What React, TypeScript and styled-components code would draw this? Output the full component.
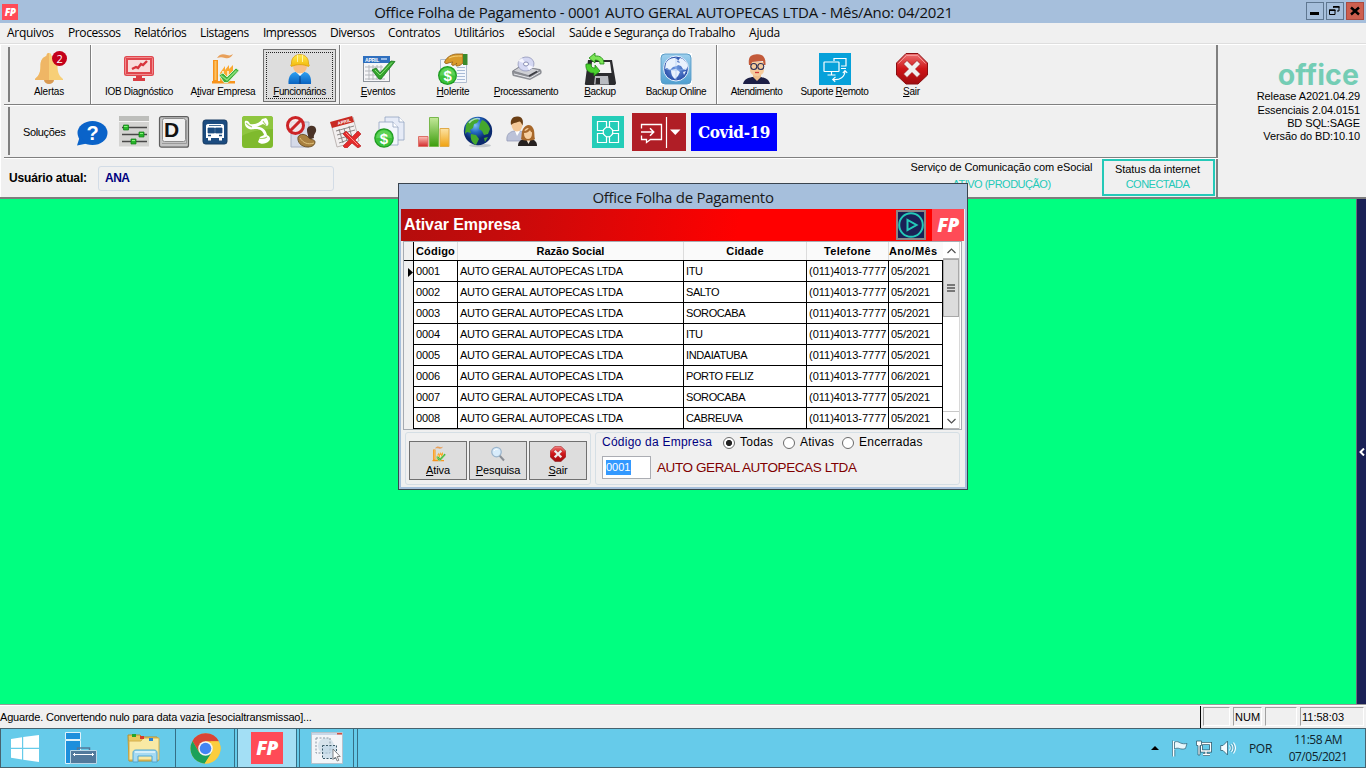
import React from "react";
import styled, { createGlobalStyle, css } from "styled-components";

const GlobalStyle = createGlobalStyle`
  * { box-sizing: border-box; }
  body { margin: 0; overflow: hidden; background: #f0f0f0; }
  u { text-decoration: underline; text-underline-offset: 1px; text-decoration-thickness: 1px; }
`;

const sans = `"Liberation Sans", Arial, sans-serif`;
const segoe = `"Open Sans", "Noto Sans", sans-serif`;

/* ---------- Shell ---------- */

const Screen = styled.div`
  position: relative;
  display: flex;
  flex-direction: column;
  width: 1366px;
  height: 768px;
  overflow: hidden;
  background: #f0f0f0;
  color: #000;
  font: 11px/13px ${sans};
  white-space: nowrap;
`;

const TitleBar = styled.header`
  display: grid;
  grid-template-columns: 60px 1fr 60px;
  align-items: center;
  height: 23px;
  background: #a6bfdc;
`;

const AppTitle = styled.h1`
  margin: 0;
  padding-right: 39px;
  text-align: center;
  font: 400 15px/22px ${segoe};
  letter-spacing: -0.25px;
  color: #111;
`;

const FpBadge = styled.span<{ $w: number; $h: number; $size: number }>`
  display: flex;
  align-items: center;
  justify-content: center;
  flex: none;
  width: ${(p) => p.$w}px;
  height: ${(p) => p.$h}px;
  background: #ff4b57;
  color: #fff;
  font: italic 800 ${(p) => p.$size}px/1 ${segoe};
  letter-spacing: -0.6px;
`;

const AppIcon = styled.div`
  padding: 0 0 0 2px;
`;

const WindowButtons = styled.div`
  display: flex;
  gap: 2px;
  justify-content: flex-end;
  padding: 0 2px 1px 0;
`;

const WindowButton = styled.button<{ $close?: boolean }>`
  width: 18px;
  height: 18px;
  padding: 0;
  border: 1px solid ${(p) => (p.$close ? "#a94a40" : "#5f7791")};
  background: ${(p) => (p.$close ? "#cd5f4f" : "#a6bfdc")};
  svg { display: block; }
`;

const MenuBar = styled.nav`
  display: flex;
  height: 21px;
  padding-left: 7px;
  border-bottom: 1px solid #dedede;
  font: 12px/19px ${segoe};
`;

const MenuItem = styled.span<{ $w: number; $ls: number }>`
  width: ${(p) => p.$w}px;
  letter-spacing: ${(p) => p.$ls}px;
`;

const HeaderArea = styled.section`
  display: flex;
  height: 155px;
  border-top: 1px solid #fff;
  border-bottom: 2px solid #7d7d7d;
`;

const Toolbars = styled.div`
  display: flex;
  flex-direction: column;
  width: 1218px;
  padding-left: 3px;
  border-left: 1px solid #fff;
`;

const Band = styled.div<{ $h: number }>`
  display: flex;
  height: ${(p) => p.$h}px;
  border-bottom: 1px solid #808080;
  border-right: 2px solid #808080;
  box-shadow: 0 1px 0 #fff;
`;

const Grip = styled.span`
  flex: none;
  width: 6px;
  margin: 2px 0;
  border-right: 2px solid #808080;
`;

const ToolGroup = styled.div<{ $cols: string; $line?: boolean }>`
  display: grid;
  grid-template-columns: ${(p) => p.$cols};
  align-items: start;
  padding-top: 4px;
  ${(p) => p.$line && css`border-right: 1px solid #808080; box-shadow: 1px 0 0 #fff;`}
`;

const ToolButton = styled.button<{ $active?: boolean; $ls?: number }>`
  display: flex;
  flex-direction: column;
  align-items: center;
  height: 53px;
  padding: ${(p) => (p.$active ? "3px 0 0" : "4px 0 0")};
  border: ${(p) => (p.$active ? "1px solid #707070" : "0")};
  background: ${(p) => (p.$active ? "#dddddd" : "none")};
  outline: ${(p) => (p.$active ? "1px dotted #222" : "0")};
  outline-offset: -4px;
  font: 10px/13px ${sans};
  letter-spacing: ${(p) => p.$ls ?? -0.3}px;
  color: #000;
  svg { flex: none; overflow: visible; }
`;

const Solutions = styled.div`
  display: flex;
  align-items: center;
  padding: 2px 0 0 13px;
`;

const SolutionsLabel = styled.span`
  width: 53px;
  letter-spacing: -0.35px;
`;

const IconSlot = styled.span<{ $gap: number }>`
  display: flex;
  margin-left: ${(p) => p.$gap}px;
`;

const RedButton = styled.button`
  width: 54px;
  height: 38px;
  margin-left: 8px;
  padding: 0;
  border: 0;
  background: #b01e26;
  svg { display: block; }
`;

const CovidButton = styled.button`
  width: 86px;
  height: 38px;
  margin-left: 5px;
  padding: 0;
  border: 0;
  background: #0000ff;
  color: #fff;
  font: bold 17px/37px "DejaVu Serif Condensed", "DejaVu Serif", serif;
  font-stretch: condensed;
  letter-spacing: -0.4px;
`;

const UserRow = styled.div`
  display: flex;
  flex: 1;
  align-items: center;
  padding-left: 5px;
  margin-top: 1px;
  border-right: 2px solid #808080;
`;

const UserLabel = styled.strong`
  width: 89px;
  font-size: 12px;
  letter-spacing: -0.15px;
`;

const UserField = styled.span`
  width: 236px;
  height: 25px;
  padding-left: 6px;
  border: 1px solid #d3dce6;
  border-radius: 3px;
  font: bold 12px/22px ${sans};
  letter-spacing: -0.5px;
  color: #000080;
`;

const ServiceStatus = styled.div`
  width: 184px;
  height: 38px;
  margin-left: auto;
  padding: 2px 1px 0 0;
  text-align: center;
  letter-spacing: -0.1px;
  line-height: 12px;
`;

const StatusValue = styled.div<{ $top: number }>`
  margin-top: ${(p) => p.$top}px;
  letter-spacing: -0.5px;
  color: #24c9b8;
`;

const InternetStatus = styled.div`
  align-self: flex-start;
  width: 113px;
  height: 37px;
  margin: 0 1px 0 8px;
  padding: 2px 2px 0 0;
  border: 2px solid #24c9b8;
  text-align: center;
  letter-spacing: -0.08px;
  line-height: 13px;
`;

const Release = styled.aside`
  display: flex;
  flex-direction: column;
  align-items: flex-end;
  flex: 1;
  padding: 16px 6px 0 0;
`;

const OfficeLogo = styled.div`
  height: 28px;
  margin-right: 1px;
  font: 700 28.5px/28px Inter, sans-serif;
  letter-spacing: 0.1px;
  color: #74cdb5;
`;

const ReleaseLine = styled.div<{ $h: number }>`
  height: ${(p) => p.$h}px;
  line-height: ${(p) => p.$h}px;
  letter-spacing: -0.1px;
`;

const Workspace = styled.main`
  display: flex;
  height: 506px;
  background: #00ff80;
  border-bottom: 1px solid #9a9a9a;
`;

const SideDrawer = styled.div`
  display: flex;
  align-items: center;
  justify-content: center;
  width: 10px;
  margin-left: auto;
  border-left: 1px solid #6c6c7c;
  background: #1a2156;
`;

const StatusBar = styled.footer`
  display: flex;
  height: 23px;
  border-top: 1px solid #fff;
  line-height: 22px;
`;

const StatusMessage = styled.span`
  flex: none;
  width: 1200px;
  letter-spacing: -0.2px;
`;

const StatusCells = styled.div`
  display: flex;
  gap: 3px;
  flex: 1;
  padding: 1px 2px 2px 2px;
  border-left: 1px solid #000;
`;

const StatusCell = styled.span<{ $w: number; $pad?: number }>`
  flex: none;
  width: ${(p) => p.$w}px;
  padding-left: ${(p) => p.$pad ?? 0}px;
  border: 1px solid;
  border-color: #a0a0a0 #fff #fff #a0a0a0;
  line-height: 19px;
`;

const Taskbar = styled.div`
  display: flex;
  height: 40px;
  border: 1px solid #47636f;
  background: #66cbea;
`;

const TaskSlot = styled.div<{ $w: number; $bg?: string; $framed?: boolean }>`
  display: flex;
  align-items: center;
  justify-content: center;
  width: ${(p) => p.$w}px;
  margin-right: ${(p) => (p.$framed ? 2 : 0)}px;
  background: ${(p) => p.$bg ?? "none"};
  ${(p) => p.$framed && css`border: solid #356f86; border-width: 0 1px;`}
`;

const TaskEdge = styled.span`
  width: 1px;
  margin-left: 1px;
  background: #356f86;
`;

const Tray = styled.div`
  display: flex;
  align-items: center;
  gap: 8px;
  margin-left: auto;
  padding-right: 9px;
  font: 12px/17px ${segoe};
  color: #10242c;
`;

const TrayArrow = styled.svg`
  margin-right: 5px;
`;

const TrayLanguage = styled.span`
  margin-left: 5px;
  letter-spacing: -0.3px;
`;

const TrayClock = styled.div`
  width: 76px;
  text-align: center;
  letter-spacing: -0.5px;
`;

/* ---------- Dialog ---------- */

const Dialog = styled.section`
  position: absolute;
  left: 398px;
  top: 183px;
  display: flex;
  flex-direction: column;
  width: 570px;
  height: 307px;
  padding: 0 2px 2px;
  border: 1px solid #3a444e;
  background: #a6bfdc;
`;

const DialogTitle = styled.h2`
  height: 25px;
  margin: 0;
  text-align: center;
  font: 400 15px/26px ${segoe};
  letter-spacing: -0.28px;
  color: #1a1a1a;
`;

const DialogBody = styled.div`
  display: flex;
  flex-direction: column;
  flex: 1;
  background: #f0f0f0;
`;

const Banner = styled.div`
  display: flex;
  align-items: center;
  width: 563px;
  height: 32px;
  padding-left: 3px;
  background: linear-gradient(100deg, #b40d0d 0%, #c50b0b 18%, #ff0000 60%);
  color: #fff;
  font: bold 16px/32px ${sans};
  letter-spacing: -0.08px;
`;

const PlayButton = styled.button`
  width: 30px;
  height: 30px;
  margin: 0 6px 0 auto;
  padding: 0;
  border: 2px solid #8c8585;
  background: #1a2156;
  svg { display: block; }
`;

const GridFrame = styled.div`
  display: flex;
  width: 559px;
  height: 189px;
  margin-left: 2px;
  border: 1px solid #a6abb2;
  background: #fff;
`;

const Table = styled.div`
  width: 539px;
`;

const columns = "10px 44px 226px 123px 82px 54px";

const TableHead = styled.div`
  display: grid;
  grid-template-columns: ${columns};
  height: 19px;
  border-bottom: 1px solid #000;
  background: #fafafa;
  font-weight: bold;
  line-height: 18px;
`;

const HeadCell = styled.span<{ $ls?: number; $last?: boolean }>`
  text-align: ${(p) => (p.$last ? "left" : "center")};
  letter-spacing: ${(p) => p.$ls ?? 0}px;
  border-right: ${(p) => (p.$last ? "0" : "1px solid #dcdcdc")};
`;

const Marker = styled.span`
  position: relative;
  background: #f0f0f0;
  border-right: 1px solid #000;
  svg { position: absolute; right: 0; top: 7px; }
`;

const Row = styled.div`
  display: grid;
  grid-template-columns: ${columns};
  height: 21px;
  border-bottom: 1px solid #000;
  line-height: 21px;
`;

const Cell = styled.span<{ $ls?: number }>`
  padding-left: 2px;
  border-right: 1px solid #000;
  letter-spacing: ${(p) => p.$ls ?? 0}px;
`;

const Scrollbar = styled.div`
  display: flex;
  flex-direction: column;
  width: 17px;
  border-right: 1px solid #d8d8d8;
`;

const ScrollArrow = styled.button`
  height: 17px;
  padding: 1px 0 0;
  border: 0;
  border-bottom: 1px solid #b5b5b5;
  background: #fff;
  svg { display: block; margin: auto; }
`;

const ScrollThumb = styled.div`
  display: flex;
  align-items: center;
  justify-content: center;
  height: 58px;
  border: 1px solid #a8a8a8;
  background: #dcdcdc;
`;

const ScrollTrack = styled.div`
  flex: 1;
  border-bottom: 1px solid #c8c8c8;
`;

const DialogFooter = styled.div`
  display: flex;
  gap: 4px;
  padding: 2px 0 0 4px;
`;

const Panel = styled.div<{ $w: number }>`
  width: ${(p) => p.$w}px;
  height: 53px;
  border: 1px solid #d5dfe5;
  border-radius: 3px;
`;

const ButtonPanel = styled(Panel)`
  display: flex;
  gap: 2px;
  padding: 8px 0 0 3px;
`;

const DialogButton = styled.button`
  display: flex;
  flex-direction: column;
  align-items: center;
  width: 58px;
  height: 39px;
  padding: 4px 0 0;
  border: 1px solid #707070;
  background: #dddddd;
  font: 11px/16px ${sans};
  letter-spacing: -0.1px;
  color: #000;
`;

const FilterRow = styled.div`
  display: flex;
  align-items: center;
  height: 19px;
  padding-left: 6px;
  font-size: 12px;
  letter-spacing: 0.24px;
`;

const FilterLabel = styled.span`
  width: 121px;
  color: #000080;
`;

const Option = styled.label<{ $w: number }>`
  display: flex;
  align-items: center;
  gap: 5px;
  width: ${(p) => p.$w}px;
`;

const Radio = styled.span<{ $on?: boolean }>`
  width: 12px;
  height: 12px;
  border: 1px solid #6a6a6a;
  border-radius: 50%;
  background: ${(p) => (p.$on ? "radial-gradient(#222 0 2.7px, #fff 3.5px)" : "#fff")};
`;

const CompanyRow = styled.div`
  display: flex;
  align-items: center;
  gap: 6px;
  padding: 4px 0 0 6px;
`;

const CodeInput = styled.span`
  width: 49px;
  height: 23px;
  padding: 3px;
  border: 1px solid #abadb3;
  background: #fff;
`;

const Selection = styled.span`
  display: block;
  width: 25px;
  height: 15px;
  background: #3399ff;
  color: #fff;
  line-height: 15px;
`;

const CompanyName = styled.span`
  font-size: 13.5px;
  letter-spacing: -0.4px;
  color: #800000;
`;

/* ---------- Icons ---------- */

type SvgProps = { size?: number; children: React.ReactNode };
const Svg = ({ size = 32, children }: SvgProps) => (
  <svg width={size} height={size} viewBox="0 0 32 32" fill="none">{children}</svg>
);

const BellIcon = () => (
  <Svg>
    <path d="M11 27h10a5 4 0 0 1-10 0z" fill="#d99a52" />
    <path d="M16 0c2 0 2.500 1.500 2.500 3 4.500 1.500 6 5 6 10 0 7 2 10 5.500 13v1H2v-1c3.500-3 5.500-6 5.500-13 0-5 1.500-8.500 6-10 0-1.500.5-3 2.500-3z" fill="#f7cf77" />
    <path d="M16 0c-2 0-2.500 1.500-2.500 3-4.500 1.500-6 5-6 10 0 7-2 10-5.500 13v1h14z" fill="#efb665" />
    <circle cx="26.500" cy="5.500" r="7.500" fill="#c4001a" />
    <text x="26.500" y="9.500" textAnchor="middle" fontFamily="Open Sans" fontSize="11" fill="#fff">2</text>
  </Svg>
);

const MonitorIcon = () => (
  <Svg>
    <rect x="1" y="3" width="30" height="20" rx="2.500" fill="#e0474e" />
    <rect x="2.500" y="4.500" width="27" height="17" rx="1" stroke="#f08c8e" />
    <rect x="5" y="7" width="22" height="12" fill="#f8dcdb" />
    <path d="M9 16l4-2 2 1 3-4 2 1 4-4" stroke="#d8333b" strokeWidth="2.400" />
    <path d="M13 23h6v2h3v3H10v-3h3z" fill="#d93d44" />
  </Svg>
);

const FactoryIcon = ({ size = 32 }: { size?: number }) => (
  <Svg size={size}>
    <path d="M10 5c3-5 7-4 10-3 3 .8 4 .3 6-1-2 4-5 5-8 4-3-1-5-1-8 0z" fill="#e8a05a" />
    <path d="M6 7h5v21h17v2.500H5V28h1z" fill="#f7941d" />
    <path d="M13 20l5-7v4l4-5v4l4-4v12l-5 4h-8z" fill="#fba931" />
    <path d="M7.500 8h2v19h-2z" fill="#fcc263" />
    <path d="M15 18h2v8h-2zM20 18h2v6h-2z" fill="#fbe3b4" />
    <path d="M12 22l4-2 4 4 9-9 3 2.500-11 12h-4z" fill="#3fae3a" stroke="#d8f0d0" strokeWidth="1" />
    <path d="M14 22.500l6 4.500 9.500-9.500" stroke="#8ce07c" strokeWidth="1.500" />
  </Svg>
);

const WorkerIcon = () => (
  <Svg>
    <defs>
      <linearGradient id="shirt" x1="0" y1="0" x2="0" y2="1"><stop stopColor="#2fa0f0" /><stop offset="1" stopColor="#0a63c0" /></linearGradient>
      <linearGradient id="hat" x1="0" y1="0" x2="0" y2="1"><stop stopColor="#ffe94a" /><stop offset="1" stopColor="#f2b90c" /></linearGradient>
    </defs>
    <path d="M4.500 31c-.5-7 2-11 7-12h9c5 1 7 5 6.500 12z" fill="url(#shirt)" />
    <path d="M12 19l4 4 4-4-1-2h-6z" fill="#fff" />
    <path d="M15.500 23h1l.7 8h-2.400z" fill="#0a4fa0" />
    <ellipse cx="16" cy="13" rx="7" ry="7.500" fill="#f8bf88" />
    <path d="M7.500 11C7 5 11 1.500 16 1.500S25 5 24.500 11c1 .5 1 2 0 2.500-5-2.500-12-2.500-17 0-1-.5-1-2 0-2.500z" fill="url(#hat)" stroke="#d89c08" strokeWidth=".7" />
    <path d="M13.500 2v7M18.500 2v7" stroke="#fff3a0" />
  </Svg>
);

const EventsIcon = () => (
  <Svg>
    <rect x="1.500" y="4" width="26" height="24.500" fill="#f6f6f8" stroke="#8d939b" />
    <rect x="1" y="3" width="27" height="7" fill="#2f6fbe" />
    <text x="3" y="8.700" fontFamily="Liberation Sans" fontWeight="bold" fontSize="5" fill="#fff">APRIL</text>
    <path d="M19 6h6" stroke="#b9d2f2" strokeWidth="1.500" />
    <path d="M3 14h18M3 18h20M3 22h20M3 26h20M7 12v15M11 12v15M15 12v15M19 12v15" stroke="#b5b8bd" />
    <path d="M10 17l4-2 4 5L29 8l4 .5L19 26h-2z" fill="#35a52e" stroke="#17751a" strokeWidth=".8" />
    <path d="M13 17l5 5L30 9.500" stroke="#8be07c" />
  </Svg>
);

const Coin = ({ x, y, r }: { x: number; y: number; r: number }) => (
  <>
    <circle cx={x} cy={y} r={r} fill="#1f9a22" />
    <circle cx={x} cy={y} r={r - 1.2} fill="#3cc23a" />
    <path d={`M${x - r + 2} ${y}a${r - 2} ${r - 2} 0 0 1 ${2 * r - 4} 0z`} fill="#6bd862" opacity=".7" />
    <text x={x} y={y + 5.5} textAnchor="middle" fontFamily="Liberation Sans" fontWeight="bold" fontSize="15" fill="#fff">$</text>
  </>
);

const PayslipIcon = () => (
  <Svg>
    <path d="M3.500 6.500h26v23h-26z" fill="#f4f7fc" stroke="#b0bdd0" />
    <path d="M20 14.500h8M20 17.500h8M20 20.500h8M20 23.500h8M20 26.500h8" stroke="#a9bbd6" />
    <path d="M8 8c2-4 7-7 12-7h6v9c-2 2-4 3-6 3-2 0-1-2 0-3-2 2-4 3-5 2s0-2 1-3c-3 .5-5 1-6 1.500C8 11 7 9.500 8 8z" fill="#d99a2b" stroke="#8d5a12" strokeWidth=".8" />
    <path d="M12 5c4-2 8-2 13-2" stroke="#f5cf74" />
    <path d="M26 1h4.500v11H26z" fill="#3a8a2c" />
    <Coin x={10.5} y={22.5} r={9.5} />
  </Svg>
);

const DriveIcon = () => (
  <Svg>
    <path d="M2 18l8-5 20 3c2 1 2 4 1 5l-11 6L3 23c-1-1-1-4-1-5z" fill="#8e9096" />
    <path d="M3 18l8-5 19 4-10 6z" fill="#cfd0d5" stroke="#77797f" strokeWidth=".7" />
    <path d="M4 21l16 4 10-6" stroke="#e8e8ec" />
    <ellipse cx="16" cy="11" rx="8" ry="7" transform="rotate(-8 16 11)" fill="#d5d8f3" stroke="#9599bb" strokeWidth=".8" />
    <path d="M16 11l-8-3 4-3zM16 11l8 3-5 3z" fill="#f5f5ff" />
    <ellipse cx="16" cy="11" rx="2.500" ry="2" fill="#fff" stroke="#8a8eb5" />
    <path d="M19 23l8-4.500" stroke="#3a3b40" strokeWidth="1.500" />
  </Svg>
);

const BackupIcon = () => (
  <Svg>
    <path d="M4 7h24l4 23c0 1.500-1 2-2 2H2c-1 0-1.500-1-1-2z" fill="#2b2b2e" />
    <path d="M8 9h18l1.500 11h-21z" fill="#f3f3f3" />
    <path d="M11 23h13l1 8.500H10z" fill="#b9bbc0" />
    <path d="M12 25h4v6h-4.500z" fill="#2b2b2e" />
    <path d="M2 11C1 18 6 20 10 20v3l6-5-5-6v3c-3 0-4-1-4-4z" fill="#4bd12e" stroke="#1d8a12" strokeWidth=".8" />
    <path d="M5 5l6-5v3c5-.5 9 2 9 8h-4c0-3-2-4-5-4v3z" fill="#7be355" stroke="#1d8a12" strokeWidth=".8" />
  </Svg>
);

const OnlineBackupIcon = () => (
  <Svg>
    <defs>
      <linearGradient id="tile" x1="0" y1="0" x2="0" y2="1"><stop stopColor="#9ed0ee" /><stop offset="1" stopColor="#4f9fd0" /></linearGradient>
      <radialGradient id="orb"><stop stopColor="#6f9be2" /><stop offset="1" stopColor="#2a4fa8" /></radialGradient>
    </defs>
    <rect width="32" height="32" fill="#fff" />
    <rect x="1" y="1" width="30" height="30" rx="4" fill="url(#tile)" stroke="#5c9cc6" />
    <circle cx="16" cy="15.500" r="12.500" fill="url(#orb)" stroke="#e8f4ff" />
    <path d="M6 10c2-4 6-5 9-5l3 2-1 2 3 1-3 3-4 1-3 3-3-2-2 1zM20 5c4 1 7 4 8 8l-2 4-3-1-2-3-3-1 2-3-2-1zM11 17l5-1 4 3-2 4-3 3c-3-2-4-5-4-9zM23 19l3-1-2 4z" fill="#e9f2fd" />
    <path d="M4 15c6 3 18 3 24 0M16 3v25" stroke="#a9c8f5" strokeWidth=".6" />
  </Svg>
);

const AttendantIcon = () => (
  <Svg>
    <path d="M2 31c1-5 5-6 9-7h9c4 1 8 2 9 7z" fill="#1d1f45" />
    <path d="M12 20h8v4l-4 4-4-4z" fill="#efbd8a" />
    <path d="M9 9h14v8c0 4-4 6-7 6s-7-2-7-6z" fill="#f7cc9c" />
    <path d="M8 12C7 5 9 2 14 1.500 20 .5 25 2 24.500 12h-1.500l-1-4-11 1-1 3z" fill="#c35a3a" />
    <circle cx="12.800" cy="13.500" r="3" stroke="#2b2d55" strokeWidth="1.100" />
    <circle cx="19.800" cy="13.500" r="3" stroke="#2b2d55" strokeWidth="1.100" />
    <path d="M14 19.500h4" stroke="#d23b3b" strokeWidth="1.300" />
  </Svg>
);

const RemoteIcon = () => (
  <Svg>
    <rect width="32" height="32" fill="#06a1da" />
    <path d="M15 8V5.500h12V13h-5" stroke="#fff" strokeWidth="1.200" />
    <rect x="5" y="9" width="15" height="9.500" rx=".5" stroke="#fff" strokeWidth="1.200" />
    <path d="M12.500 18.500v3M8.500 22h8M22 15.500h5" stroke="#fff" strokeWidth="1.200" />
    <path d="M14 26.500c7 1 12-3 12-8.500M23.800 20.200l2.200-2.700 2.200 2.400M16.500 24l-2.800 2.400 2.500 2.400" stroke="#fff" strokeWidth="1.100" />
  </Svg>
);

const ExitIcon = ({ size = 32 }: { size?: number }) => (
  <Svg size={size}>
    <defs>
      <linearGradient id={`exit${size}`} x1="0" y1="0" x2="0" y2="1"><stop stopColor="#ee7474" /><stop offset=".5" stopColor="#cf1518" /><stop offset="1" stopColor="#a00c10" /></linearGradient>
    </defs>
    <path d="M10 .5h12L31.500 10v12L22 31H10L.5 22V10z" fill={`url(#exit${size})`} stroke="#8a0f12" />
    <path d="M2.500 10.500L10.500 2.500h11l8 8" stroke="#f6a5a5" strokeWidth=".8" />
    <path d="M11 7.500l5 5 5-5 3.500 3.500-5 5 5 5-3.500 3.500-5-5-5 5L7.500 21l5-5-5-5z" fill="#f0f0f0" stroke="#a31012" strokeWidth=".7" />
  </Svg>
);

const HelpIcon = () => (
  <Svg>
    <ellipse cx="16.500" cy="17" rx="15" ry="12" fill="#0a63c9" />
    <path d="M4 20L1 29.500l10-2z" fill="#0a63c9" />
    <text x="16.500" y="24" textAnchor="middle" fontFamily="Liberation Sans" fontWeight="bold" fontSize="20" fill="#fff">?</text>
  </Svg>
);

const SlidersIcon = () => (
  <Svg>
    <rect x="1" y="0" width="30" height="31" fill="#d4d4d2" />
    <rect x="1" y="0" width="30" height="5" fill="#bdbebb" />
    <path d="M1 5.500h30M1 31h30" stroke="#f5f5f5" />
    <path d="M4 11.500h25M4 18.500h25M4 25.500h25" stroke="#484848" strokeWidth="1.400" />
    <path d="M5.500 9h5v5h-5zM21 16h5v5h-5zM13 23h5v5h-5z" fill="#27b52a" stroke="#107c16" strokeWidth=".7" />
    <path d="M6 10.500h3.500M22 17.500h3M14 24.500h3" stroke="#8bf07c" />
  </Svg>
);

const KeyDIcon = () => (
  <Svg>
    <rect x="1.500" y=".7" width="29" height="30.500" rx="2" fill="#c4c4c4" stroke="#5f5f5f" strokeWidth="1.200" />
    <rect x="4.500" y="2.500" width="23" height="23" rx="2" fill="#f1f1f1" stroke="#8d8d8d" />
    <path d="M4 27.500h24.500V4" stroke="#9a9a9a" />
    <text x="13.500" y="20.500" textAnchor="middle" fontFamily="Liberation Sans" fontWeight="bold" fontSize="21" fill="#111">D</text>
  </Svg>
);

const BusIcon = () => (
  <Svg>
    <rect x="4" y="4" width="24" height="24" rx="2.500" fill="#1c4c80" stroke="#163a63" />
    <path d="M9 8h14c1.500 0 2 1 2 2v12h-2v2.500h-3V22h-8v2.500H9V22H7V10c0-1 .5-2 2-2z" fill="#fff" />
    <path d="M10 9.500h12M9 12h6.500v5H9zM16.500 12H23v5h-6.500z" fill="#1c4c80" stroke="#1c4c80" strokeWidth=".8" />
    <path d="M9 19.500h3M20 19.500h3" stroke="#1c4c80" strokeWidth="1.600" />
  </Svg>
);

const GreenPhoneIcon = () => (
  <Svg>
    <rect x="0" y="0" width="31" height="32" rx="3" fill="#7fba2d" />
    <path d="M0 3a3 3 0 0 1 3-3h25a3 3 0 0 1 3 3v10C20 13 8 15 0 20z" fill="#8fc63f" />
    <path d="M3 5c3-1 4 1 5 3 5 1 10-1 12-5l4-1c3 3 3 7 1 8l-4-2c-2 1-4 2-7 3 6-1 10 3 11 8 3 1 4 4 2 6-3 3-8 4-11 1l2-5c1-1 3-1 4-2-1-4-4-6-8-6-3 0-5 1-7 0-3-1-5-4-4-8z" fill="#fff" />
    <path d="M17 22c3 1 5 1 8-1M4 7c2 2 3 3 6 4M21 5c1 2 2 3 3 4" stroke="#a9d268" strokeWidth="1.100" />
  </Svg>
);

const StampIcon = () => (
  <Svg>
    <path d="M5 6h18v25H5z" fill="#d5dae8" stroke="#aab0c4" />
    <path d="M21 14c0-5 8-6 9-1 1 4-3 5-2 9l-6 2c1-4-1-6-1-10z" fill="#4a3327" />
    <path d="M12 21c2-4 8-3 10 0s7 2 7 5-3 5-7 5c-7 0-11-5-10-10z" fill="#a9803f" stroke="#5e441b" strokeWidth=".8" />
    <path d="M14 22c3 5 8 7 14 5" stroke="#e0c27c" />
    <circle cx="9.500" cy="9.500" r="8" fill="#f9e9e9" fillOpacity=".7" stroke="#cc2427" strokeWidth="3" />
    <path d="M4 15L15 4" stroke="#cc2427" strokeWidth="3" />
  </Svg>
);

const CalendarXIcon = () => (
  <Svg>
    <path d="M1 7L23 1l6 24-22 6z" fill="#f2efef" stroke="#bdb6b4" />
    <path d="M0 6L22 0l2 6L2 12z" fill="#c92a22" />
    <text x="8" y="9" transform="rotate(-15 8 9)" fontFamily="Liberation Sans" fontWeight="bold" fontSize="4.500" fill="#fff">APRIL</text>
    <path d="M6 15l18-5M7 19l18-5M8 23l14-4M9 27l9-3M9 13l4 14M14 12l3 13M19 10l3 12" stroke="#8d8987" />
    <path d="M13 18l3-3 6 6 6-6 3 3-6 6 6 6-3 2-6-5-6 6-3-3 6-6z" fill="#e32b2b" stroke="#b01518" strokeWidth=".6" />
    <path d="M16 17l12 12" stroke="#ff8c86" strokeWidth="1" />
  </Svg>
);

const MoneyDocsIcon = () => (
  <Svg>
    <path d="M12 1h14l5 5v18H12z" fill="#e6ebf7" stroke="#93a3c0" strokeWidth=".8" />
    <path d="M26 1v5h5" fill="#fff" stroke="#93a3c0" strokeWidth=".8" />
    <path d="M6 6h14l5 5v18H6z" fill="#f3f6fc" stroke="#93a3c0" strokeWidth=".8" />
    <path d="M20 6v5h5" fill="#fff" stroke="#93a3c0" strokeWidth=".8" />
    <Coin x={11} y={22} r={9.8} />
  </Svg>
);

const BarsIcon = () => (
  <Svg>
    <defs>
      <linearGradient id="barRed" x1="0" y1="0" x2="0" y2="1"><stop stopColor="#fbc2b8" /><stop offset="1" stopColor="#d2282a" /></linearGradient>
      <linearGradient id="barGreen" x1="0" y1="0" x2="0" y2="1"><stop stopColor="#c3e89a" /><stop offset="1" stopColor="#3c9d0c" /></linearGradient>
      <linearGradient id="barGold" x1="0" y1="0" x2="0" y2="1"><stop stopColor="#fce3a4" /><stop offset="1" stopColor="#f0a210" /></linearGradient>
    </defs>
    <path d="M.5 20.500h9.500v10H.5z" fill="url(#barRed)" stroke="#dc7068" />
    <path d="M11.500 1.500h9v29h-9z" fill="url(#barGreen)" stroke="#78b84c" />
    <path d="M22 12.500h9v18h-9z" fill="url(#barGold)" stroke="#e0aa48" />
  </Svg>
);

const GlobeIcon = () => (
  <Svg>
    <defs><radialGradient id="sea" cx=".4" cy=".3"><stop stopColor="#7fc1f5" /><stop offset=".5" stopColor="#2468c2" /><stop offset="1" stopColor="#0b2a6e" /></radialGradient></defs>
    <ellipse cx="18" cy="29.500" rx="11" ry="1.800" fill="#c4c8cc" />
    <circle cx="16" cy="15" r="14.200" fill="url(#sea)" />
    <path d="M4 9c2-4 5-6 9-7l4 2-2 3-3 1-1 4-3 2 1 3-4-1-2 2zM20 4c4 1 7 5 8 9l-2 5-4 1-2-4-3-2 1-5zM9 18l5 1 3 4-3 6c-4-2-6-6-5-11zM22 22l4-1-3 5z" fill="#45a82e" />
    <path d="M7 7c3-4 8-5 11-4" stroke="#d7efff" strokeWidth="1.500" opacity=".7" />
  </Svg>
);

const PeopleIcon = () => (
  <Svg>
    <path d="M1 25c-1-6 2-9 7-10h6c4 1 6 4 6 10z" fill="#bcc2d8" stroke="#8f97b5" strokeWidth=".7" />
    <path d="M9 15l2 5 3-5z" fill="#fff" />
    <ellipse cx="11" cy="9" rx="5.500" ry="6.500" fill="#f3c796" />
    <path d="M5 9C4 3 7 0 12 .5c4 0 6 4 4.500 9-1-2-2-4-3-4-2 1-6 1-8.500 3.500z" fill="#6b3f14" />
    <path d="M12 30c0-4 2-6 6-7h7c4 1 6 3 6 7z" fill="#26211f" />
    <path d="M20 23l2.500 5 2.500-5z" fill="#f6e6d2" />
    <path d="M15 23c1-3 0-6 2-10 3-5 8-5 10-1 2 3 1 8 2 11-2 2-12 2-14 0z" fill="#a8682a" />
    <ellipse cx="22" cy="17.500" rx="4" ry="5.500" fill="#f7cfa0" />
    <path d="M18 16c3 0 5-2 6-4 1 2 2 3 2 4" stroke="#a8682a" strokeWidth="2" />
  </Svg>
);

const TealIcon = () => (
  <Svg>
    <rect width="32" height="32" fill="#24cdb8" />
    <g stroke="#fff" strokeWidth="1.200">
      <path d="M5.500 5.500h9v6L11 14.500H5.500zM26.500 5.500h-9v6l3.500 3h5.500zM5.500 26.500h9v-6L11 17.500H5.500zM26.500 26.500h-9v-6l3.500-3h5.500z" />
      <circle cx="16" cy="16" r="4.800" fill="#24cdb8" />
    </g>
  </Svg>
);

const ChatArrowIcon = () => (
  <svg width="54" height="38" viewBox="0 0 54 38" fill="none">
    <path d="M9.500 15.500v-4h20v15h-11l-4 3v-3h-5v-4" stroke="#fff" strokeWidth="1.300" />
    <path d="M9 19h12.500M18 15.300l3.700 3.700-3.700 3.700" stroke="#fff" strokeWidth="1.500" />
    <path d="M34.500 4v31" stroke="#fff" strokeWidth="1.200" />
    <path d="M38 16.500h10.500L43.300 22z" fill="#fff" />
  </svg>
);

const MagnifierIcon = () => (
  <Svg size={16}>
    <path d="M19 19l9 10" stroke="#8b8f96" strokeWidth="4" />
    <circle cx="13" cy="12" r="9.500" fill="#d8ecfb" stroke="#9bb5cc" strokeWidth="2.500" />
    <path d="M8 10c1-3 4-4 7-3" stroke="#fff" strokeWidth="2" />
  </Svg>
);

const WindowsIcon = () => (
  <svg width="28" height="27" viewBox="0 0 28 27" fill="#fff">
    <path d="M0 4l11-1.700v10.500H0zM12.200 2.100L28 0v12.800H12.200zM0 14h11v10.500L0 22.800zM12.200 14H28v13l-15.800-2.200z" />
  </svg>
);

const ServerIcon = () => (
  <svg width="32" height="32" viewBox="0 0 32 32" fill="none">
    <path d="M.5.500h15v7h-15z" fill="#1d8fdc" stroke="#dff2fb" />
    <path d="M.5 8.500h15v23h-15z" fill="#1d8fdc" stroke="#dff2fb" />
    <path d="M12.500 18v-2h12v2" stroke="#52799b" strokeWidth="1.500" />
    <path d="M5.500 18.500h26v13h-26z" fill="#52799b" stroke="#b9d6e6" />
    <path d="M8 22.500h21M9.500 21v3M27.500 21v3" stroke="#fff" />
  </svg>
);

const ExplorerIcon = () => (
  <svg width="34" height="30" viewBox="0 0 34 30" fill="none">
    <path d="M1 2h12l2 2h15l1 4v20H2z" fill="#e8c860" stroke="#b88f2c" />
    <path d="M2 8h12l2-3h16v22H2z" fill="#f9e9a4" stroke="#d4ae4c" />
    <path d="M5 1h4v3H5z" fill="#25a52c" /><path d="M13 3h4v3h-4z" fill="#d83a2c" /><path d="M22 5h4v3h-4z" fill="#2b83d8" />
    <path d="M6 29v-9c0-2 1-3 3-3h18c2 0 3 1 3 3v9h-5v-6H11v6z" fill="#a6daf2" stroke="#4ea8d4" />
    <path d="M8 19h20" stroke="#e4f6fd" strokeWidth="1.500" />
  </svg>
);

const ChromeIcon = () => (
  <Svg size={31}>
    <circle cx="16" cy="16" r="15.500" fill="#fcc934" />
    <path d="M16 8.500h13.800A15.500 15.500 0 0 0 2.600 8.200L9.500 20z" fill="#d94436" />
    <path d="M2.600 8.200a15.500 15.500 0 0 0 12.600 23.300L22.500 20 9.500 20z" fill="#1ba15a" />
    <path d="M29.600 8.700a15.500 15.500 0 0 1-14.400 22.800l7.300-11.500-1-11.300z" fill="#fbcd3e" />
    <circle cx="16" cy="16" r="7.500" fill="#f5f5f5" />
    <circle cx="16" cy="16" r="6" fill="#4285f4" />
  </Svg>
);

const SnipIcon = () => (
  <svg width="32" height="32" viewBox="0 0 32 32" fill="none">
    <path d="M.5.500h31v31H.5z" fill="#f3f5f8" stroke="#b7c2cc" />
    <path d="M1 1h30v2H1z" fill="#c9d8e8" /><path d="M26 1h5v1.500h-5z" fill="#d6503f" />
    <ellipse cx="15" cy="14" rx="8" ry="8" fill="#d6e3eb" />
    <path d="M5 6h14v15H5z" stroke="#8a98a5" strokeDasharray="2 1.500" />
    <path d="M11.500 13.500h14v13h-14z" fill="#bcd6e6" fillOpacity=".6" stroke="#3b5a68" strokeDasharray="2 1.500" />
    <path d="M22 17v10.500l2.500-2.500 1.700 4 1.600-.7-1.600-3.800h3z" fill="#fff" stroke="#666" strokeWidth=".8" />
  </svg>
);

const FlagIcon = () => (
  <svg width="16" height="17" viewBox="0 0 16 17" fill="none">
    <path d="M1.500 1v15.500" stroke="#fff" strokeWidth="2" /><path d="M.5.500v16M2.800 10v6.500" stroke="#3c6c80" strokeWidth=".7" />
    <path d="M2.500 2c3-1 4 0 6 1 2 .8 4 1 6.500.5l-1.500 5C11 9.500 9 9 7.500 8.500 6 8 4 8 2.500 9z" fill="#e8f7fc" stroke="#3c6c80" strokeWidth=".8" />
  </svg>
);

const NetworkIcon = () => (
  <svg width="16" height="16" viewBox="0 0 16 16" fill="none">
    <path d="M5.500 3.500h9v7.500h-9z" stroke="#2f5f73" strokeWidth="3" /><path d="M10 11v3M7 14.500h7" stroke="#2f5f73" strokeWidth="2.800" />
    <path d="M5.500 3.500h9v7.500h-9zM10 11v3M7 14.500h7" stroke="#fff" strokeWidth="1.300" />
    <path d="M.5 1h5v4.500H4V15H2V5.500H.5z" fill="#fff" stroke="#2f5f73" strokeWidth=".8" />
  </svg>
);

const SpeakerIcon = () => (
  <svg width="16" height="16" viewBox="0 0 16 16" fill="none">
    <path d="M.7 5.500H3L7.500 1v14L3 10.500H.7z" fill="#f4fbfe" stroke="#3c6c80" strokeWidth=".9" />
    <path d="M9.500 5.500c1 1.500 1 3.500 0 5M11.500 4c2 2.500 2 5.500 0 8M13.500 2.500c2.500 3.500 2.500 7.500 0 11" stroke="#fff" strokeWidth="1.100" />
    <path d="M10.400 5c1 2 1 4 0 6M12.500 3.500c2 3 2 6 0 9" stroke="#3c6c80" strokeWidth=".5" />
  </svg>
);

/* ---------- Data ---------- */

const menu: [string, number, number][] = [
  ["Arquivos", 61, -0.3], ["Processos", 66, -0.4], ["Relatórios", 66, -0.38], ["Listagens", 63, -0.37],
  ["Impressos", 67, -0.5], ["Diversos", 58, -0.45], ["Contratos", 66, -0.35], ["Utilitários", 64, -0.35],
  ["eSocial", 51, -0.35], ["Saúde e Segurança do Trabalho", 180, -0.37], ["Ajuda", 50, -0.2],
];

const solutions: [React.ComponentType, number][] = [
  [HelpIcon, 0], [SlidersIcon, 10], [KeyDIcon, 8], [BusIcon, 9], [GreenPhoneIcon, 11], [StampIcon, 12],
  [CalendarXIcon, 12], [MoneyDocsIcon, 11], [BarsIcon, 13], [GlobeIcon, 12], [PeopleIcon, 12], [TealIcon, 54],
];

const companies: [string, string, string][] = [
  ["0001", "ITU", "05/2021"], ["0002", "SALTO", "05/2021"], ["0003", "SOROCABA", "05/2021"],
  ["0004", "ITU", "05/2021"], ["0005", "INDAIATUBA", "05/2021"], ["0006", "PORTO FELIZ", "06/2021"],
  ["0007", "SOROCABA", "05/2021"], ["0008", "CABREUVA", "05/2021"],
];

/* ---------- Sections ---------- */

const ActivateCompanyDialog = () => (
  <Dialog>
    <DialogTitle>Office Folha de Pagamento</DialogTitle>
    <DialogBody>
      <Banner>
        Ativar Empresa
        <PlayButton>
          <svg width="26" height="26" viewBox="0 0 26 26" fill="none" stroke="#24c9b8" strokeWidth="2">
            <circle cx="13" cy="13" r="11.800" />
            <path d="M9.500 8v10l9-5z" />
          </svg>
        </PlayButton>
        <FpBadge $w={32} $h={32} $size={19}>FP</FpBadge>
      </Banner>
      <GridFrame>
        <Table>
          <TableHead>
            <Marker />
            <HeadCell $ls={0.2}>Código</HeadCell>
            <HeadCell>Razão Social</HeadCell>
            <HeadCell $ls={0.1}>Cidade</HeadCell>
            <HeadCell $ls={0.3}>Telefone</HeadCell>
            <HeadCell $ls={0.4} $last>Ano/Mês</HeadCell>
          </TableHead>
          {companies.map(([code, city, month], i) => (
            <Row key={code}>
              <Marker>
                {i === 0 && <svg width="5" height="9" viewBox="0 0 5 9"><path d="M0 0l5 4.500L0 9z" /></svg>}
              </Marker>
              <Cell $ls={-0.1}>{code}</Cell>
              <Cell $ls={-0.32}>AUTO GERAL AUTOPECAS LTDA</Cell>
              <Cell $ls={-0.4}>{city}</Cell>
              <Cell>(011)4013-7777</Cell>
              <Cell $ls={-0.1}>{month}</Cell>
            </Row>
          ))}
        </Table>
        <Scrollbar>
          <ScrollArrow>
            <svg width="9" height="6" viewBox="0 0 9 6" fill="none" stroke="#505050" strokeWidth="1.200"><path d="M.5 5l4-4 4 4" /></svg>
          </ScrollArrow>
          <ScrollThumb>
            <svg width="8" height="8" viewBox="0 0 8 8" stroke="#555" strokeWidth="1.300"><path d="M0 1h8M0 4h8M0 7h8" /></svg>
          </ScrollThumb>
          <ScrollTrack />
          <ScrollArrow>
            <svg width="9" height="6" viewBox="0 0 9 6" fill="none" stroke="#505050" strokeWidth="1.200"><path d="M.5 1l4 4 4-4" /></svg>
          </ScrollArrow>
        </Scrollbar>
      </GridFrame>
      <DialogFooter>
        <ButtonPanel $w={186}>
          <DialogButton><FactoryIcon size={16} /><span><u>A</u>tiva</span></DialogButton>
          <DialogButton><MagnifierIcon /><span><u>P</u>esquisa</span></DialogButton>
          <DialogButton><ExitIcon size={16} /><span><u>S</u>air</span></DialogButton>
        </ButtonPanel>
        <Panel $w={365}>
          <FilterRow>
            <FilterLabel>Código da Empresa</FilterLabel>
            <Option $w={60}><Radio $on />Todas</Option>
            <Option $w={59}><Radio />Ativas</Option>
            <Option $w={90}><Radio />Encerradas</Option>
          </FilterRow>
          <CompanyRow>
            <CodeInput><Selection>0001</Selection></CodeInput>
            <CompanyName>AUTO GERAL AUTOPECAS LTDA</CompanyName>
          </CompanyRow>
        </Panel>
      </DialogFooter>
    </DialogBody>
  </Dialog>
);

export default function App() {
  return (
    <Screen>
      <GlobalStyle />
      <TitleBar>
        <AppIcon><FpBadge $w={16} $h={16} $size={10}>FP</FpBadge></AppIcon>
        <AppTitle>Office Folha de Pagamento - 0001 AUTO GERAL AUTOPECAS LTDA - Mês/Ano: 04/2021</AppTitle>
        <WindowButtons>
          <WindowButton><svg width="16" height="16" viewBox="0 0 16 16"><path d="M3 9h9v3H3z" /></svg></WindowButton>
          <WindowButton>
            <svg width="16" height="16" viewBox="0 0 16 16" fill="none" stroke="#000">
              <path d="M6.500 4.500v-1H12V8h-2M2.500 7h5.500v4.500H2.500z" /><path d="M2 7.300h6.500M6 4H12.500" strokeWidth="1.600" />
            </svg>
          </WindowButton>
          <WindowButton $close><svg width="16" height="16" viewBox="0 0 16 16" stroke="#000" strokeWidth="2.400"><path d="M4 4.500l8 7M12 4.500l-8 7" /></svg></WindowButton>
        </WindowButtons>
      </TitleBar>

      <MenuBar>
        {menu.map(([label, w, ls]) => <MenuItem key={label} $w={w} $ls={ls}>{label}</MenuItem>)}
      </MenuBar>

      <HeaderArea>
        <Toolbars>
          <Band $h={60}>
            <Grip />
            <ToolGroup $cols="78px 2px" $line>
              <ToolButton $ls={-0.15}><BellIcon />Alertas</ToolButton>
            </ToolGroup>
            <ToolGroup $cols="96px 72px 4px 73px 3px" $line>
              <ToolButton $ls={-0.28}><MonitorIcon />IOB Diagnóstico</ToolButton>
              <ToolButton $ls={-0.25}><FactoryIcon /><span>A<u>t</u>ivar Empresa</span></ToolButton>
              <span />
              <ToolButton $active $ls={-0.38}><WorkerIcon /><span><u>F</u>uncionários</span></ToolButton>
            </ToolGroup>
            <ToolGroup $cols="76px 74px 72px 76px 76px 2px" $line>
              <ToolButton $ls={-0.2}><EventsIcon /><span><u>E</u>ventos</span></ToolButton>
              <ToolButton $ls={-0.2}><PayslipIcon /><span><u>H</u>olerite</span></ToolButton>
              <ToolButton $ls={-0.4}><DriveIcon /><span><u>P</u>rocessamento</span></ToolButton>
              <ToolButton><BackupIcon /><span><u>B</u>ackup</span></ToolButton>
              <ToolButton $ls={-0.36}><OnlineBackupIcon />Backup Online</ToolButton>
            </ToolGroup>
            <ToolGroup $cols="79px 77px 77px">
              <ToolButton $ls={-0.4}><AttendantIcon />Atendimento</ToolButton>
              <ToolButton $ls={-0.35}><RemoteIcon /><span>Suporte <u>R</u>emoto</span></ToolButton>
              <ToolButton $ls={-0.2}><ExitIcon /><span><u>S</u>air</span></ToolButton>
            </ToolGroup>
          </Band>
          <Band $h={53}>
            <Grip />
            <Solutions>
              <SolutionsLabel>Soluções</SolutionsLabel>
              {solutions.map(([Icon, gap], i) => <IconSlot key={i} $gap={gap}><Icon /></IconSlot>)}
              <RedButton><ChatArrowIcon /></RedButton>
              <CovidButton>Covid-19</CovidButton>
            </Solutions>
          </Band>
          <UserRow>
            <UserLabel>Usuário atual:</UserLabel>
            <UserField>ANA</UserField>
            <ServiceStatus>
              <div>Serviço de Comunicação com eSocial</div>
              <StatusValue $top={5}>ATIVO (PRODUÇÃO)</StatusValue>
            </ServiceStatus>
            <InternetStatus>
              <div>Status da internet</div>
              <StatusValue $top={2}>CONECTADA</StatusValue>
            </InternetStatus>
          </UserRow>
        </Toolbars>
        <Release>
          <OfficeLogo>office</OfficeLogo>
          <ReleaseLine $h={14}>Release A2021.04.29</ReleaseLine>
          <ReleaseLine $h={14}>Essenciais 2.04.0151</ReleaseLine>
          <ReleaseLine $h={13}>BD SQL:SAGE</ReleaseLine>
          <ReleaseLine $h={12}>Versão do BD:10.10</ReleaseLine>
        </Release>
      </HeaderArea>

      <Workspace>
        <SideDrawer>
          <svg width="6" height="8" viewBox="0 0 6 8" fill="none" stroke="#fff" strokeWidth="2"><path d="M5 .5L1.500 4 5 7.500" /></svg>
        </SideDrawer>
      </Workspace>

      <StatusBar>
        <StatusMessage>Aguarde. Convertendo nulo para data vazia [esocialtransmissao]...</StatusMessage>
        <StatusCells>
          <StatusCell $w={27} />
          <StatusCell $w={29} $pad={1}>NUM</StatusCell>
          <StatusCell $w={32} />
          <StatusCell $w={64} $pad={1}>11:58:03</StatusCell>
        </StatusCells>
      </StatusBar>

      <Taskbar>
        <TaskSlot $w={48}><WindowsIcon /></TaskSlot>
        <TaskSlot $w={64}><ServerIcon /></TaskSlot>
        <TaskSlot $w={62}><ExplorerIcon /></TaskSlot>
        <TaskSlot $w={60} $framed><ChromeIcon /></TaskSlot>
        <TaskSlot $w={60} $framed $bg="#a3dff5"><FpBadge $w={32} $h={32} $size={19}>FP</FpBadge></TaskSlot>
        <TaskSlot $w={55} $framed><SnipIcon /></TaskSlot>
        <TaskEdge />
        <Tray>
          <TrayArrow width="8" height="4" viewBox="0 0 8 4"><path d="M0 4l4-4 4 4z" /></TrayArrow>
          <FlagIcon />
          <NetworkIcon />
          <SpeakerIcon />
          <TrayLanguage>POR</TrayLanguage>
          <TrayClock>
            <div>11:58 AM</div>
            <div>07/05/2021</div>
          </TrayClock>
        </Tray>
      </Taskbar>

      <ActivateCompanyDialog />
    </Screen>
  );
}
